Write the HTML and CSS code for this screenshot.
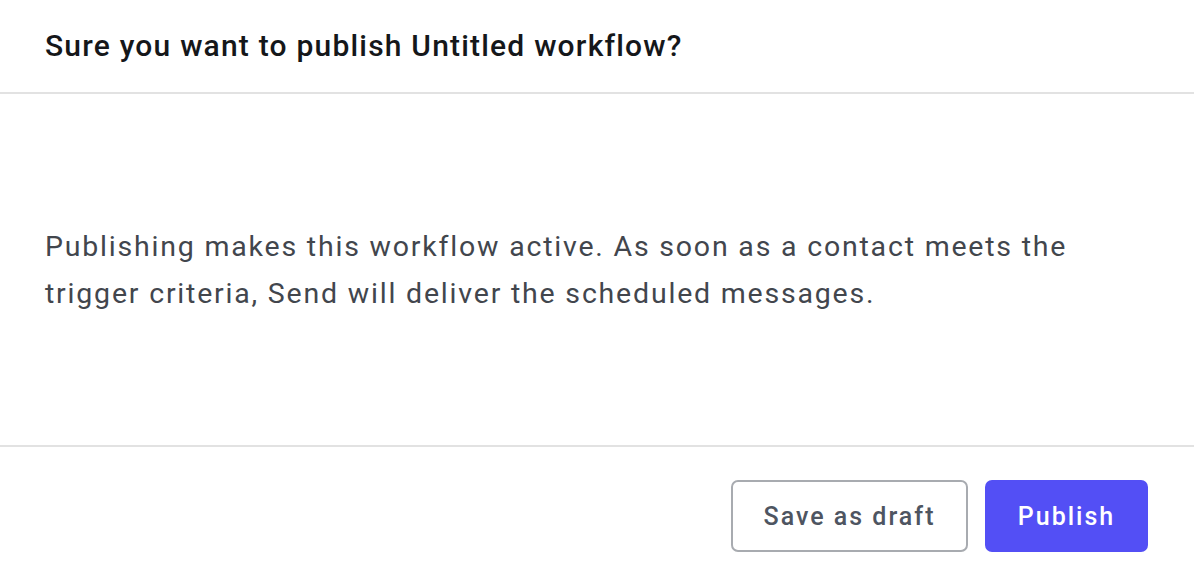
FILE: index.html
```html
<!DOCTYPE html>
<html>
<head>
<meta charset="utf-8">
<link rel="stylesheet" href="styles.css">
</head>
<body>
<div class="modal">
  <div class="modal-header">
    <h2 class="title">Sure you want to publish Untitled workflow?</h2>
  </div>
  <div class="modal-body">
    <p class="message">Publishing makes this workflow active. As soon as a contact meets the trigger criteria, Send will deliver the scheduled messages.</p>
  </div>
  <div class="modal-footer">
    <button class="btn btn-secondary">Save as draft</button>
    <button class="btn btn-primary">Publish</button>
  </div>
</div>
</body>
</html>
```

FILE: styles.css
```css
* { box-sizing: border-box; }
html, body {
  margin: 0;
  padding: 0;
  background: #ffffff;
  font-family: Roboto, "Liberation Sans", sans-serif;
}
.modal {
  width: 1194px;
  height: 582px;
  display: flex;
  flex-direction: column;
}
.modal-header {
  height: 94px;
  border-bottom: 2px solid #e2e2e2;
  display: flex;
  align-items: center;
  padding: 0 45px;
}
.title {
  margin: 0;
  font-size: 30px;
  font-weight: 500;
  letter-spacing: 1.2px;
  color: #15171a;
  padding-bottom: 2px;
}
.modal-body {
  height: 353px;
  border-bottom: 2px solid #e2e2e2;
  display: flex;
  align-items: center;
  padding: 0 45px;
}
.message {
  margin: 0;
  font-size: 28.5px;
  line-height: 47px;
  letter-spacing: 1.8px;
  color: #42464d;
  max-width: 1100px;
}
.modal-footer {
  flex: 1;
  display: flex;
  justify-content: flex-end;
  align-items: flex-start;
  gap: 17px;
  padding: 33px 46px 0 0;
}
.btn {
  font-family: Roboto, "Liberation Sans", sans-serif;
  font-size: 25px;
  font-weight: 500;
  letter-spacing: 2px;
  border-radius: 7px;
  height: 72px;
  cursor: pointer;
}
.btn-secondary {
  width: 237px;
  background: #ffffff;
  border: 2px solid #a8abb0;
  color: #4e5561;
}
.btn-primary {
  width: 163px;
  background: #534ff5;
  border: none;
  color: #ffffff;
}
```
